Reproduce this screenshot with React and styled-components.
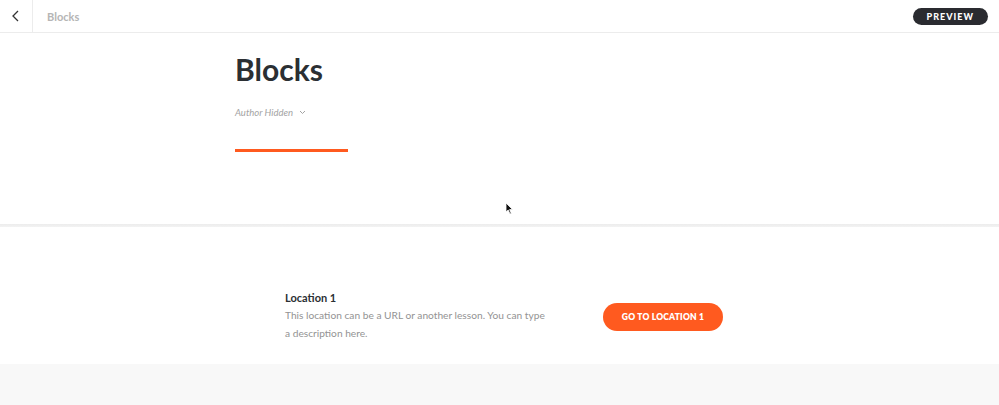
import React from 'react';
import styled, { createGlobalStyle } from 'styled-components';

const GlobalStyle = createGlobalStyle`
  html, body {
    margin: 0;
    padding: 0;
    background: #f8f8f8;
    font-family: Lato, "Open Sans", sans-serif;
    -webkit-font-smoothing: antialiased;
  }
`;

const Page = styled.div`
  position: relative;
  width: 999px;
  height: 405px;
  overflow: hidden;
  background: #f8f8f8;
`;

const TopBar = styled.header`
  display: flex;
  align-items: center;
  height: 32px;
  background: #fff;
  border-bottom: 1px solid #ececec;
`;

const BackButton = styled.button`
  display: flex;
  align-items: center;
  justify-content: center;
  width: 33px;
  height: 32px;
  padding: 0;
  border: none;
  border-right: 1px solid #ececec;
  background: transparent;
  color: #333;
  cursor: pointer;
`;

const BarTitle = styled.span`
  margin-left: 14px;
  font-size: 11px;
  font-weight: 700;
  color: #b5b5b5;
`;

const PreviewButton = styled.button`
  margin-left: auto;
  margin-right: 11px;
  height: 17px;
  padding: 0 14px;
  border: none;
  border-radius: 9px;
  background: #2a2b30;
  color: #fff;
  font-family: Lato, sans-serif;
  font-size: 9px;
  font-weight: 900;
  letter-spacing: 1px;
`;

const Hero = styled.section`
  height: 191px;
  background: #fff;
  padding-left: 235px;
  box-sizing: border-box;
  padding-top: 17px;
`;

const Title = styled.h1`
  margin: 0;
  font-size: 30px;
  font-weight: 700;
  line-height: 38px;
  color: #2b2f33;
`;

const Author = styled.div`
  display: flex;
  align-items: center;
  gap: 6px;
  margin-top: 19px;
  font-size: 9.5px;
  font-style: italic;
  color: #a3a3a3;
`;

const Accent = styled.div`
  width: 113px;
  height: 3px;
  margin-top: 31px;
  background: #ff5a1f;
`;

const Divider = styled.div`
  height: 3px;
  background: linear-gradient(180deg, #ececec 0%, #f3f3f3 100%);
`;

const Block = styled.section`
  height: 137px;
  background: #fff;
  display: flex;
  align-items: center;
  padding-left: 285px;
  box-sizing: border-box;
  padding-top: 42px;
`;

const Text = styled.div`
  width: 262px;
  margin-right: 56px;
`;

const BlockTitle = styled.div`
  font-size: 11px;
  font-weight: 700;
  color: #2b2f33;
  line-height: 14px;
`;

const BlockDesc = styled.p`
  margin: 1px 0 0;
  font-size: 10.2px;
  font-weight: 400;
  line-height: 18px;
  color: #939393;
`;

const ActionButton = styled.button`
  height: 28px;
  width: 120px;
  border: none;
  border-radius: 14px;
  background: #ff5a1f;
  color: #fff;
  font-family: Lato, sans-serif;
  font-size: 8.5px;
  font-weight: 800;
  letter-spacing: 0.2px;
`;

const Cursor = styled.svg`
  position: absolute;
  left: 505px;
  top: 202px;
`;

export default function App() {
  return (
    <Page>
      <GlobalStyle />
      <TopBar>
        <BackButton aria-label="Back">
          <svg width="10" height="12" viewBox="0 0 10 12" fill="none">
            <path d="M7 1 L2 6 L7 11" stroke="#333" strokeWidth="1.3" />
          </svg>
        </BackButton>
        <BarTitle>Blocks</BarTitle>
        <PreviewButton>PREVIEW</PreviewButton>
      </TopBar>
      <Hero>
        <Title>Blocks</Title>
        <Author>
          Author Hidden
          <svg width="7" height="5" viewBox="0 0 7 5" fill="none">
            <path d="M1 1 L3.5 3.5 L6 1" stroke="#a3a3a3" strokeWidth="1" />
          </svg>
        </Author>
        <Accent />
      </Hero>
      <Divider />
      <Block>
        <Text>
          <BlockTitle>Location 1</BlockTitle>
          <BlockDesc>
            This location can be a URL or another lesson. You can type a description here.
          </BlockDesc>
        </Text>
        <ActionButton>GO TO LOCATION 1</ActionButton>
      </Block>
      <Cursor width="9" height="13" viewBox="0 0 9 13">
        <path d="M1 1 L1 10 L3.2 8 L5 12 L6.3 11.4 L4.6 7.6 L7.6 7.6 Z" fill="#111" stroke="#fff" strokeWidth="0.8" />
      </Cursor>
    </Page>
  );
}
